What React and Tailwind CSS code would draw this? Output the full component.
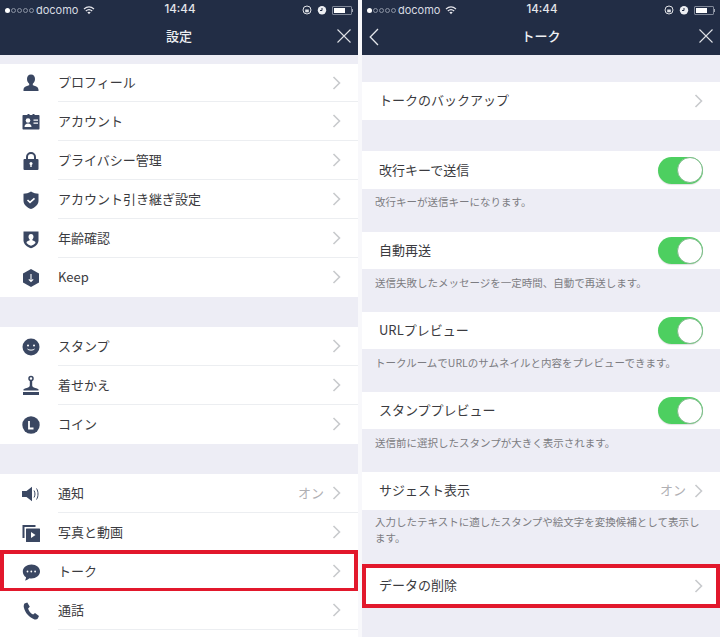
import React from 'react';

const JP = "font-['Noto_Sans_CJK_JP','Noto_Sans',sans-serif]";

function Chevron() {
  return (
    <svg width="9" height="14" viewBox="0 0 9 14" className="shrink-0">
      <path d="M1.500 1 L7.500 7 L1.500 13" fill="none" stroke="#c8cacd" strokeWidth="1.600" />
    </svg>
  );
}

function Icon({ children }) {
  return (
    <svg width="24" height="24" viewBox="0 0 24 24" fill="#3a4762">
      {children}
    </svg>
  );
}

const icons = {
  profile: (
    <Icon>
      <path d="M12 3.500c2.600 0 4 2 4 4.600 0 2-.9 3.800-2.200 4.700v1.500c2.800.8 5.700 1.700 5.700 4.700v1H4.500v-1c0-3 2.900-3.900 5.700-4.700v-1.500C8.900 11.900 8 10.100 8 8.100c0-2.600 1.400-4.600 4-4.600z" />
    </Icon>
  ),
  account: (
    <Icon>
      <path d="M4.500 5h4V4h2v1h3V4h2v1h4c.8 0 1 .5 1 1v12.500c0 .6-.3 1-1 1h-15c-.7 0-1-.4-1-1V6c0-.5.2-1 1-1z" />
      <circle cx="9" cy="10.500" r="2.300" fill="#fff" />
      <path d="M5.500 17c0-2.300 1.500-3.500 3.500-3.500s3.500 1.200 3.500 3.500z" fill="#fff" />
      <path d="M14.500 9.500h4.500v1.200h-4.500zM14.500 12.500h4.500v1.200h-4.500z" fill="#fff" />
    </Icon>
  ),
  lock: (
    <Icon>
      <path d="M8 10.500V8a4 4 0 0 1 8 0v2.500" fill="none" stroke="#3a4762" strokeWidth="2" />
      <rect x="4.500" y="10" width="15" height="11" rx="1" />
      <circle cx="12" cy="14.500" r="1.500" fill="#fff" />
      <rect x="11.300" y="15" width="1.400" height="3" fill="#fff" />
    </Icon>
  ),
  shieldCheck: (
    <Icon>
      <path d="M12 3.500c2.500 1.500 5 2.200 7.500 2.200v7c0 4-3.500 6.800-7.500 8.300-4-1.500-7.500-4.300-7.500-8.300v-7c2.500 0 5-.7 7.500-2.200z" />
      <path d="M8.500 12l2.500 2.300 4.500-4" fill="none" stroke="#fff" strokeWidth="1.600" />
    </Icon>
  ),
  shieldUser: (
    <Icon>
      <path d="M4.500 4.500h15v9c0 3.800-3.500 6.200-7.500 7.800-4-1.600-7.500-4-7.500-7.800z" />
      <path d="M12 7c1.600 0 2.500 1.200 2.500 2.800 0 1.200-.5 2.200-1.200 2.700v.8c1.600.5 3.200 1 3.200 2.600-1.300 1.300-2.800 2.200-4.500 2.900-1.700-.7-3.200-1.600-4.500-2.900 0-1.600 1.600-2.100 3.200-2.600v-.8c-.7-.5-1.200-1.500-1.200-2.700C9.500 8.200 10.400 7 12 7z" fill="#fff" />
    </Icon>
  ),
  keep: (
    <Icon>
      <path d="M12 3l8 4.500v9L12 21l-8-4.500v-9z" />
      <path d="M12 8v7.500M9.800 13.300l2.200 2.200 2.200-2.200" fill="none" stroke="#fff" strokeWidth="1.100" />
    </Icon>
  ),
  stamp: (
    <Icon>
      <circle cx="12" cy="12" r="8.500" />
      <circle cx="9" cy="10.500" r="1" fill="#fff" />
      <circle cx="15" cy="10.500" r="1" fill="#fff" />
      <path d="M8.500 14c1 1.500 6 1.500 7 0" fill="none" stroke="#fff" strokeWidth="1" />
    </Icon>
  ),
  theme: (
    <Icon>
      <circle cx="12" cy="4.500" r="2" fill="none" stroke="#3a4762" strokeWidth="1.500" />
      <path d="M10.800 6.500h2.400v5c0 1.300 1.200 2 3 2.500 1.500.4 3.300.8 3.300 1.500v1H4.500v-1c0-.7 1.800-1.100 3.300-1.500 1.800-.5 3-1.200 3-2.500z" />
      <rect x="4" y="18" width="16" height="3" />
    </Icon>
  ),
  coin: (
    <Icon>
      <circle cx="12" cy="12" r="8.700" />
      <path d="M10 8v7.500h4.500" fill="none" stroke="#fff" strokeWidth="1.800" />
    </Icon>
  ),
  sound: (
    <Icon>
      <path d="M3 9h4.500L13 4.800v14.400L7.500 15H3z" />
      <path d="M15 8.500c1.300 2 1.300 5 0 7M17.500 6.500c2 3 2 8 0 11" fill="none" stroke="#3a4762" strokeWidth="1" />
    </Icon>
  ),
  media: (
    <Icon>
      <path d="M3.500 4h13v2H5.500v11h-2z" />
      <rect x="7" y="7.500" width="14" height="13.500" rx=".5" />
      <path d="M12 11l4.500 3-4.500 3z" fill="#fff" />
    </Icon>
  ),
  talk: (
    <Icon>
      <path d="M12.500 4.500c4.800 0 8.500 2.900 8.500 6.900 0 4-4.200 7-8.500 7-.7 0-1.400 0-2-.2-1.400 1-3 2-4.500 2.300.5-1 1-2 1-3.300C5 15.800 3.800 13.800 3.800 11.400c0-4 3.900-6.900 8.700-6.900z" />
      <circle cx="8.500" cy="11.500" r=".9" fill="#fff" />
      <circle cx="12.300" cy="11.500" r=".9" fill="#fff" />
      <circle cx="16.100" cy="11.500" r=".9" fill="#fff" />
    </Icon>
  ),
  phone: (
    <Icon>
      <path d="M5.500 4.500L8.300 3.500l2.500 4.300-1.700 1.700c.6 2.500 2.500 4.800 5 6l1.900-1.400 4 2.800-1.200 2.700c-.7.900-2 1.200-3.300.8C10.500 18.800 6 14 4.800 8.300c-.2-1.500 0-3 .7-3.800z" />
    </Icon>
  ),
};

function StatusBar() {
  return (
    <div className="h-[20px] flex items-center relative text-white">
      <div className="flex items-center gap-px pl-[5px]">
        <span className="w-[5px] h-[5px] rounded-full bg-white" />
        {[0, 1, 2, 3].map((i) => (
          <span key={i} className="w-[5px] h-[5px] rounded-full border border-[#8a92a3]" />
        ))}
      </div>
      <span className="ml-[2px] text-[11px] font-['Inter',sans-serif] text-[#d8dbe2] leading-none">docomo</span>
      <svg width="12" height="9" viewBox="0 0 12 9" className="ml-[5px]">
        <path d="M1 3c3-2.600 7-2.600 10 0M2.800 5c2-1.700 4.400-1.700 6.400 0" fill="none" stroke="#e8e8ee" strokeWidth="1.200" />
        <path d="M4.300 6.300c1-.8 2.400-.8 3.400 0L6 8.200z" fill="#e8e8ee" />
      </svg>
      <span className="absolute left-1/2 -translate-x-1/2 ml-[1px] text-[11.500px] font-medium font-['Inter',sans-serif] text-[#e4e6ea] leading-none">14:44</span>
      <div className="ml-auto flex items-center pr-[5px]">
        <svg width="10" height="10" viewBox="0 0 10 10">
          <circle cx="5" cy="5" r="4" fill="none" stroke="#dfe1e6" strokeWidth="1" />
          <rect x="3.200" y="4.500" width="3.600" height="2.800" fill="#dfe1e6" />
        </svg>
        <svg width="10" height="10" viewBox="0 0 10 10" className="ml-[5px]">
          <circle cx="5" cy="5.300" r="4.200" fill="#eceef2" />
          <path d="M5 3v2.500H3" fill="none" stroke="#222d45" strokeWidth="1" />
        </svg>
        <div className="ml-[5px] w-[20px] h-[9px] border border-[#7f8798] rounded-[1px] p-px">
          <div className="h-full w-[11px] bg-white" />
        </div>
        <span className="w-px h-[3px] bg-[#a0a6b3]" />
      </div>
    </div>
  );
}

function Header({ title, back }) {
  return (
    <div className="h-[55px] bg-[#222d45] shrink-0">
      <StatusBar />
      <div className="h-[35px] flex items-center justify-center relative">
        {back && (
          <svg width="10" height="18" viewBox="0 0 10 18" className="absolute left-[7px] top-[8px]">
            <path d="M9 1L1.200 9 9 17" fill="none" stroke="#e4e6ea" strokeWidth="1.300" />
          </svg>
        )}
        <span className={`${JP} text-[13px] font-medium text-[#eef0f3] -mt-[3px]`}>{title}</span>
        <svg width="14" height="14" viewBox="0 0 14 14" className="absolute right-[7px] top-[9px]">
          <path d="M.5 .5l13 13M13.500 .5l-13 13" fill="none" stroke="#dfe1e6" strokeWidth="1.100" />
        </svg>
      </div>
    </div>
  );
}

function MenuRow({ icon, label, value, last, highlight, className = 'h-[39px]', labelClass = '' }) {
  return (
    <div className={`${className} flex relative bg-white`}>
      <div className="w-[58px] flex items-center justify-center pl-[3px] shrink-0">{icons[icon]}</div>
      <div className={`flex-1 flex items-center pr-[17px] border-b ${last ? 'border-transparent' : 'border-[#eceef1]'}`}>
        <span className={`${JP} text-[13px] text-[#3b3b40] ${labelClass}`}>{label}</span>
        {value && <span className={`${JP} text-[13px] text-[#b0b0b4] ml-auto mr-[8px]`}>{value}</span>}
        <span className={value ? '' : 'ml-auto'}><Chevron /></span>
      </div>
      {highlight && <div className="absolute inset-x-0 top-[-2px] bottom-[-1px] border-[4px] border-[#e2182c]" />}
    </div>
  );
}

function SettingRow({ label, value, toggle, chevron, highlight, className = 'h-[38px]', labelClass = 'pb-px' }) {
  return (
    <div className={`${className} bg-white flex items-center pl-[17px] pr-[17px] relative`}>
      <span className={`${JP} text-[13px] text-[#3b3b40] ${labelClass}`}>{label}</span>
      <div className="ml-auto flex items-center gap-[8px]">
        {value && <span className={`${JP} text-[13px] text-[#b0b0b4] ${labelClass}`}>{value}</span>}
        {chevron && <Chevron />}
        {toggle && (
          <div className="w-[45px] h-[27px] rounded-full bg-[#4dcf60] flex justify-end items-center shadow-[0_1px_1px_rgba(0,0,0,0.12)]">
            <div className="w-[26px] h-[26px] rounded-full bg-white border border-[#7fb98a]" />
          </div>
        )}
      </div>
      {highlight && <div className="absolute inset-x-0 top-[-3px] bottom-[-4px] border-[4px] border-[#e2182c]" />}
    </div>
  );
}

function Caption({ children, className = 'h-[43px] pt-[6px]' }) {
  return (
    <div className={`${className} pl-[13px] pr-[13px] ${JP} text-[10.500px] leading-[16px] text-[#7c7c82]`}>
      {children}
    </div>
  );
}

export default function App() {
  return (
    <div className="w-[720px] h-[637px] flex bg-[#f8f8fb] overflow-hidden">
      {/* Settings list */}
      <div className="w-[358px] shrink-0 bg-[#ededf5] flex flex-col">
        <Header title="設定" />
        <div className="mt-[9px]">
          <MenuRow icon="profile" label="プロフィール" className="h-[38px]" labelClass="pb-[2px]" />
          <MenuRow icon="account" label="アカウント" />
          <MenuRow icon="lock" label="プライバシー管理" />
          <MenuRow icon="shieldCheck" label="アカウント引き継ぎ設定" />
          <MenuRow icon="shieldUser" label="年齢確認" />
          <MenuRow icon="keep" label="Keep" last />
        </div>
        <div className="mt-[30px]">
          <MenuRow icon="stamp" label="スタンプ" />
          <MenuRow icon="theme" label="着せかえ" />
          <MenuRow icon="coin" label="コイン" last />
        </div>
        <div className="mt-[30px]">
          <MenuRow icon="sound" label="通知" value="オン" />
          <MenuRow icon="media" label="写真と動画" />
          <MenuRow icon="talk" label="トーク" highlight last />
          <MenuRow icon="phone" label="通話" />
          <div className="h-[10px] bg-white" />
        </div>
      </div>

      {/* Talk settings */}
      <div className="w-[358px] ml-[4px] shrink-0 bg-[#ededf5] flex flex-col">
        <Header title="トーク" back />
        <div className="mt-[27px]">
          <SettingRow label="トークのバックアップ" chevron labelClass="pb-[3px]" />
        </div>
        <div className="mt-[31px]">
          <SettingRow label="改行キーで送信" toggle />
          <Caption className="h-[43px] pt-[5px]">改行キーが送信キーになります。</Caption>
          <SettingRow label="自動再送" toggle className="h-[37px]" />
          <Caption>送信失敗したメッセージを一定時間、自動で再送します。</Caption>
          <SettingRow label="URLプレビュー" toggle className="h-[37px]" />
          <Caption>トークルームでURLのサムネイルと内容をプレビューできます。</Caption>
          <SettingRow label="スタンププレビュー" toggle className="h-[37px]" />
          <Caption>送信前に選択したスタンプが大きく表示されます。</Caption>
          <SettingRow label="サジェスト表示" value="オン" chevron labelClass="pb-[3px]" />
          <Caption className="h-[57px] pt-[4px]">入力したテキストに適したスタンプや絵文字を変換候補として表示します。</Caption>
          <SettingRow label="データの削除" chevron highlight className="h-[37px]" />
        </div>
      </div>
    </div>
  );
}
